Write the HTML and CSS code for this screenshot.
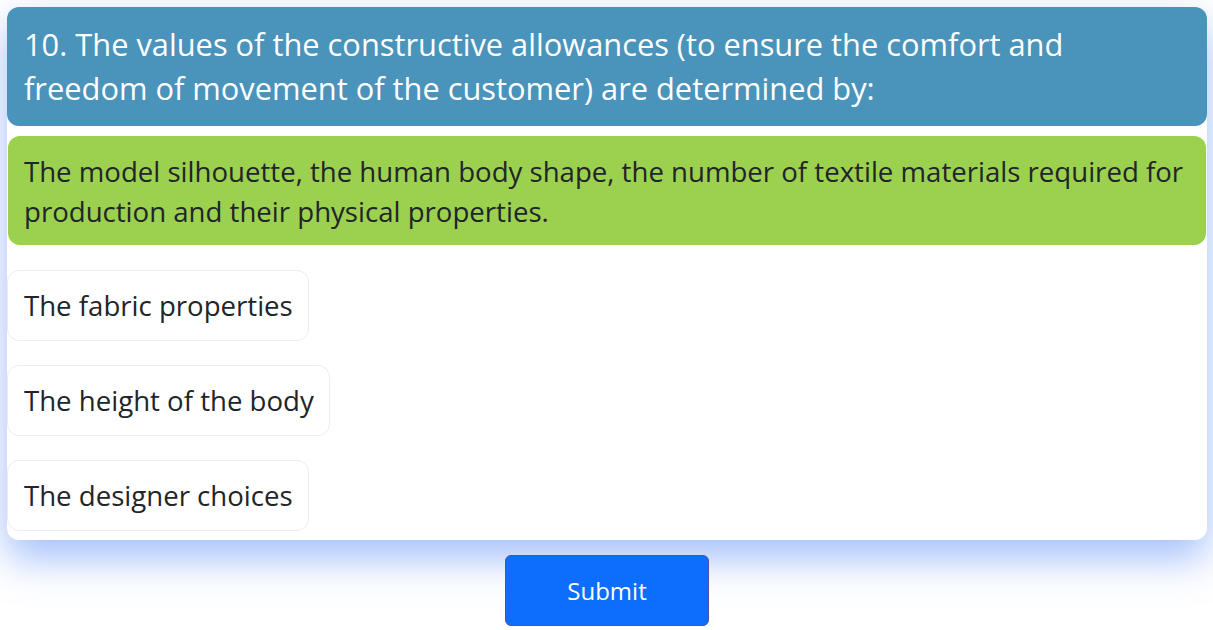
FILE: index.html
```html
<!DOCTYPE html>
<html lang="en">
<head>
<meta charset="utf-8">
<title>Quiz</title>
<link rel="stylesheet" href="styles.css">
</head>
<body>
<main class="page">
  <section class="card">
    <h2 class="question">10. The values of the constructive allowances (to ensure the comfort and freedom of movement of the customer) are determined by:</h2>
    <div class="answer correct">The model silhouette, the human body shape, the number of textile materials required for production and their physical properties.</div>
    <div class="options">
      <div class="option">The fabric properties</div>
      <div class="option">The height of the body</div>
      <div class="option">The designer choices</div>
    </div>
  </section>
  <div class="actions">
    <button class="submit" type="button">Submit</button>
  </div>
</main>
</body>
</html>
```

FILE: styles.css
```css
* { box-sizing: border-box; }
html, body {
  margin: 0;
  background: #ffffff;
  font-family: "Open Sans", "Noto Sans", "Liberation Sans", sans-serif;
  color: #212529;
}
.page {
  padding: 7px 6px 0 7px;
  display: flex;
  flex-direction: column;
}
.card {
  background: #ffffff;
  border-radius: 12px;
  box-shadow: 0 18px 40px rgba(70, 125, 245, 0.5);
  padding-bottom: 9px;
  display: flex;
  flex-direction: column;
}
.question {
  margin: 0;
  background: #4a93bb;
  color: #ffffff;
  font-weight: 400;
  font-size: 30.8px;
  line-height: 44px;
  padding: 15px 17px 16px;
  border-radius: 12px;
}
.answer {
  margin: 10px 1px 0;
  border-radius: 12px;
  font-size: 27.6px;
  line-height: 40px;
  padding: 15px 12px 14px 16px;
}
.correct {
  background: #9cd04f;
}
.options {
  display: flex;
  flex-direction: column;
  align-items: flex-start;
  gap: 24px;
  margin-top: 25px;
}
.option {
  border: 1px solid #ebedf0;
  border-radius: 12px;
  font-size: 27.6px;
  line-height: 37px;
  padding: 16px 15px 16px 16px;
  background: #ffffff;
}
.actions {
  display: flex;
  justify-content: center;
  padding: 15px 0 4px;
}
.submit {
  width: 204px;
  height: 71px;
  background: #0d6efd;
  color: #ffffff;
  border: 1px solid #4a55a0;
  border-radius: 6px;
  font-family: inherit;
  font-size: 24px;
}
```
